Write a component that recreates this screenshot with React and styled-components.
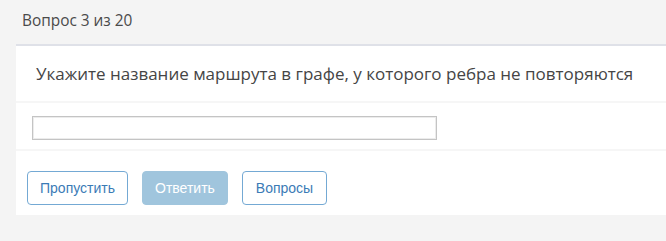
import React from 'react'
import styled, { createGlobalStyle } from 'styled-components'

const GlobalStyle = createGlobalStyle`
  body {
    margin: 0;
    background: #f4f4f4;
    font-family: "Open Sans", "Liberation Sans", sans-serif;
    color: #454545;
  }
`

const Page = styled.div`
  width: 666px;
  height: 241px;
  overflow: hidden;
`

const Counter = styled.div`
  height: 44px;
  padding-left: 22px;
  display: flex;
  align-items: center;
  font-size: 15.4px;
  color: #4a4a4a;
  box-sizing: border-box;
  padding-bottom: 4px;
`

const Card = styled.div`
  margin-left: 16px;
  background: #fff;
  border-top: 2px solid #dfe1e8;
`

const Question = styled.div`
  height: 57px;
  padding-left: 20px;
  display: flex;
  align-items: center;
  font-size: 17px;
  color: #454545;
  border-bottom: 2px solid #f6f6f6;
  box-sizing: border-box;
`

const AnswerRow = styled.div`
  height: 48px;
  padding: 13px 0 0 16px;
  box-sizing: border-box;
  border-bottom: 2px solid #f6f6f6;
`

const AnswerInput = styled.input`
  display: block;
  width: 405px;
  height: 24px;
  box-sizing: border-box;
  border: 1px solid #c4c4c4;
  box-shadow: inset 0 0 0 1px #ececec;
  outline: none;
  padding: 0 4px;
  margin: 0;
`

const Actions = styled.div`
  display: flex;
  gap: 14px;
  padding: 20px 11px 10px;
`

const Button = styled.button`
  height: 34px;
  padding: 0 ${p => p.$pad}px;
  border-radius: 4px;
  font-family: "Liberation Sans", Arial, sans-serif;
  font-size: 14px;
  cursor: pointer;
  border: 1px solid ${p => (p.$filled ? '#a0c5dd' : '#74a9d4')};
  background: ${p => (p.$filled ? '#a0c5dd' : '#fff')};
  color: ${p => (p.$filled ? '#fff' : '#3b7bb6')};
`

export default function App() {
  return (
    <Page>
      <GlobalStyle />
      <Counter>Вопрос 3 из 20</Counter>
      <Card>
        <Question>Укажите название маршрута в графе, у которого ребра не повторяются</Question>
        <AnswerRow>
          <AnswerInput type="text" />
        </AnswerRow>
        <Actions>
          <Button $pad={12}>Пропустить</Button>
          <Button $pad={12} $filled disabled>Ответить</Button>
          <Button $pad={13}>Вопросы</Button>
        </Actions>
      </Card>
    </Page>
  )
}
